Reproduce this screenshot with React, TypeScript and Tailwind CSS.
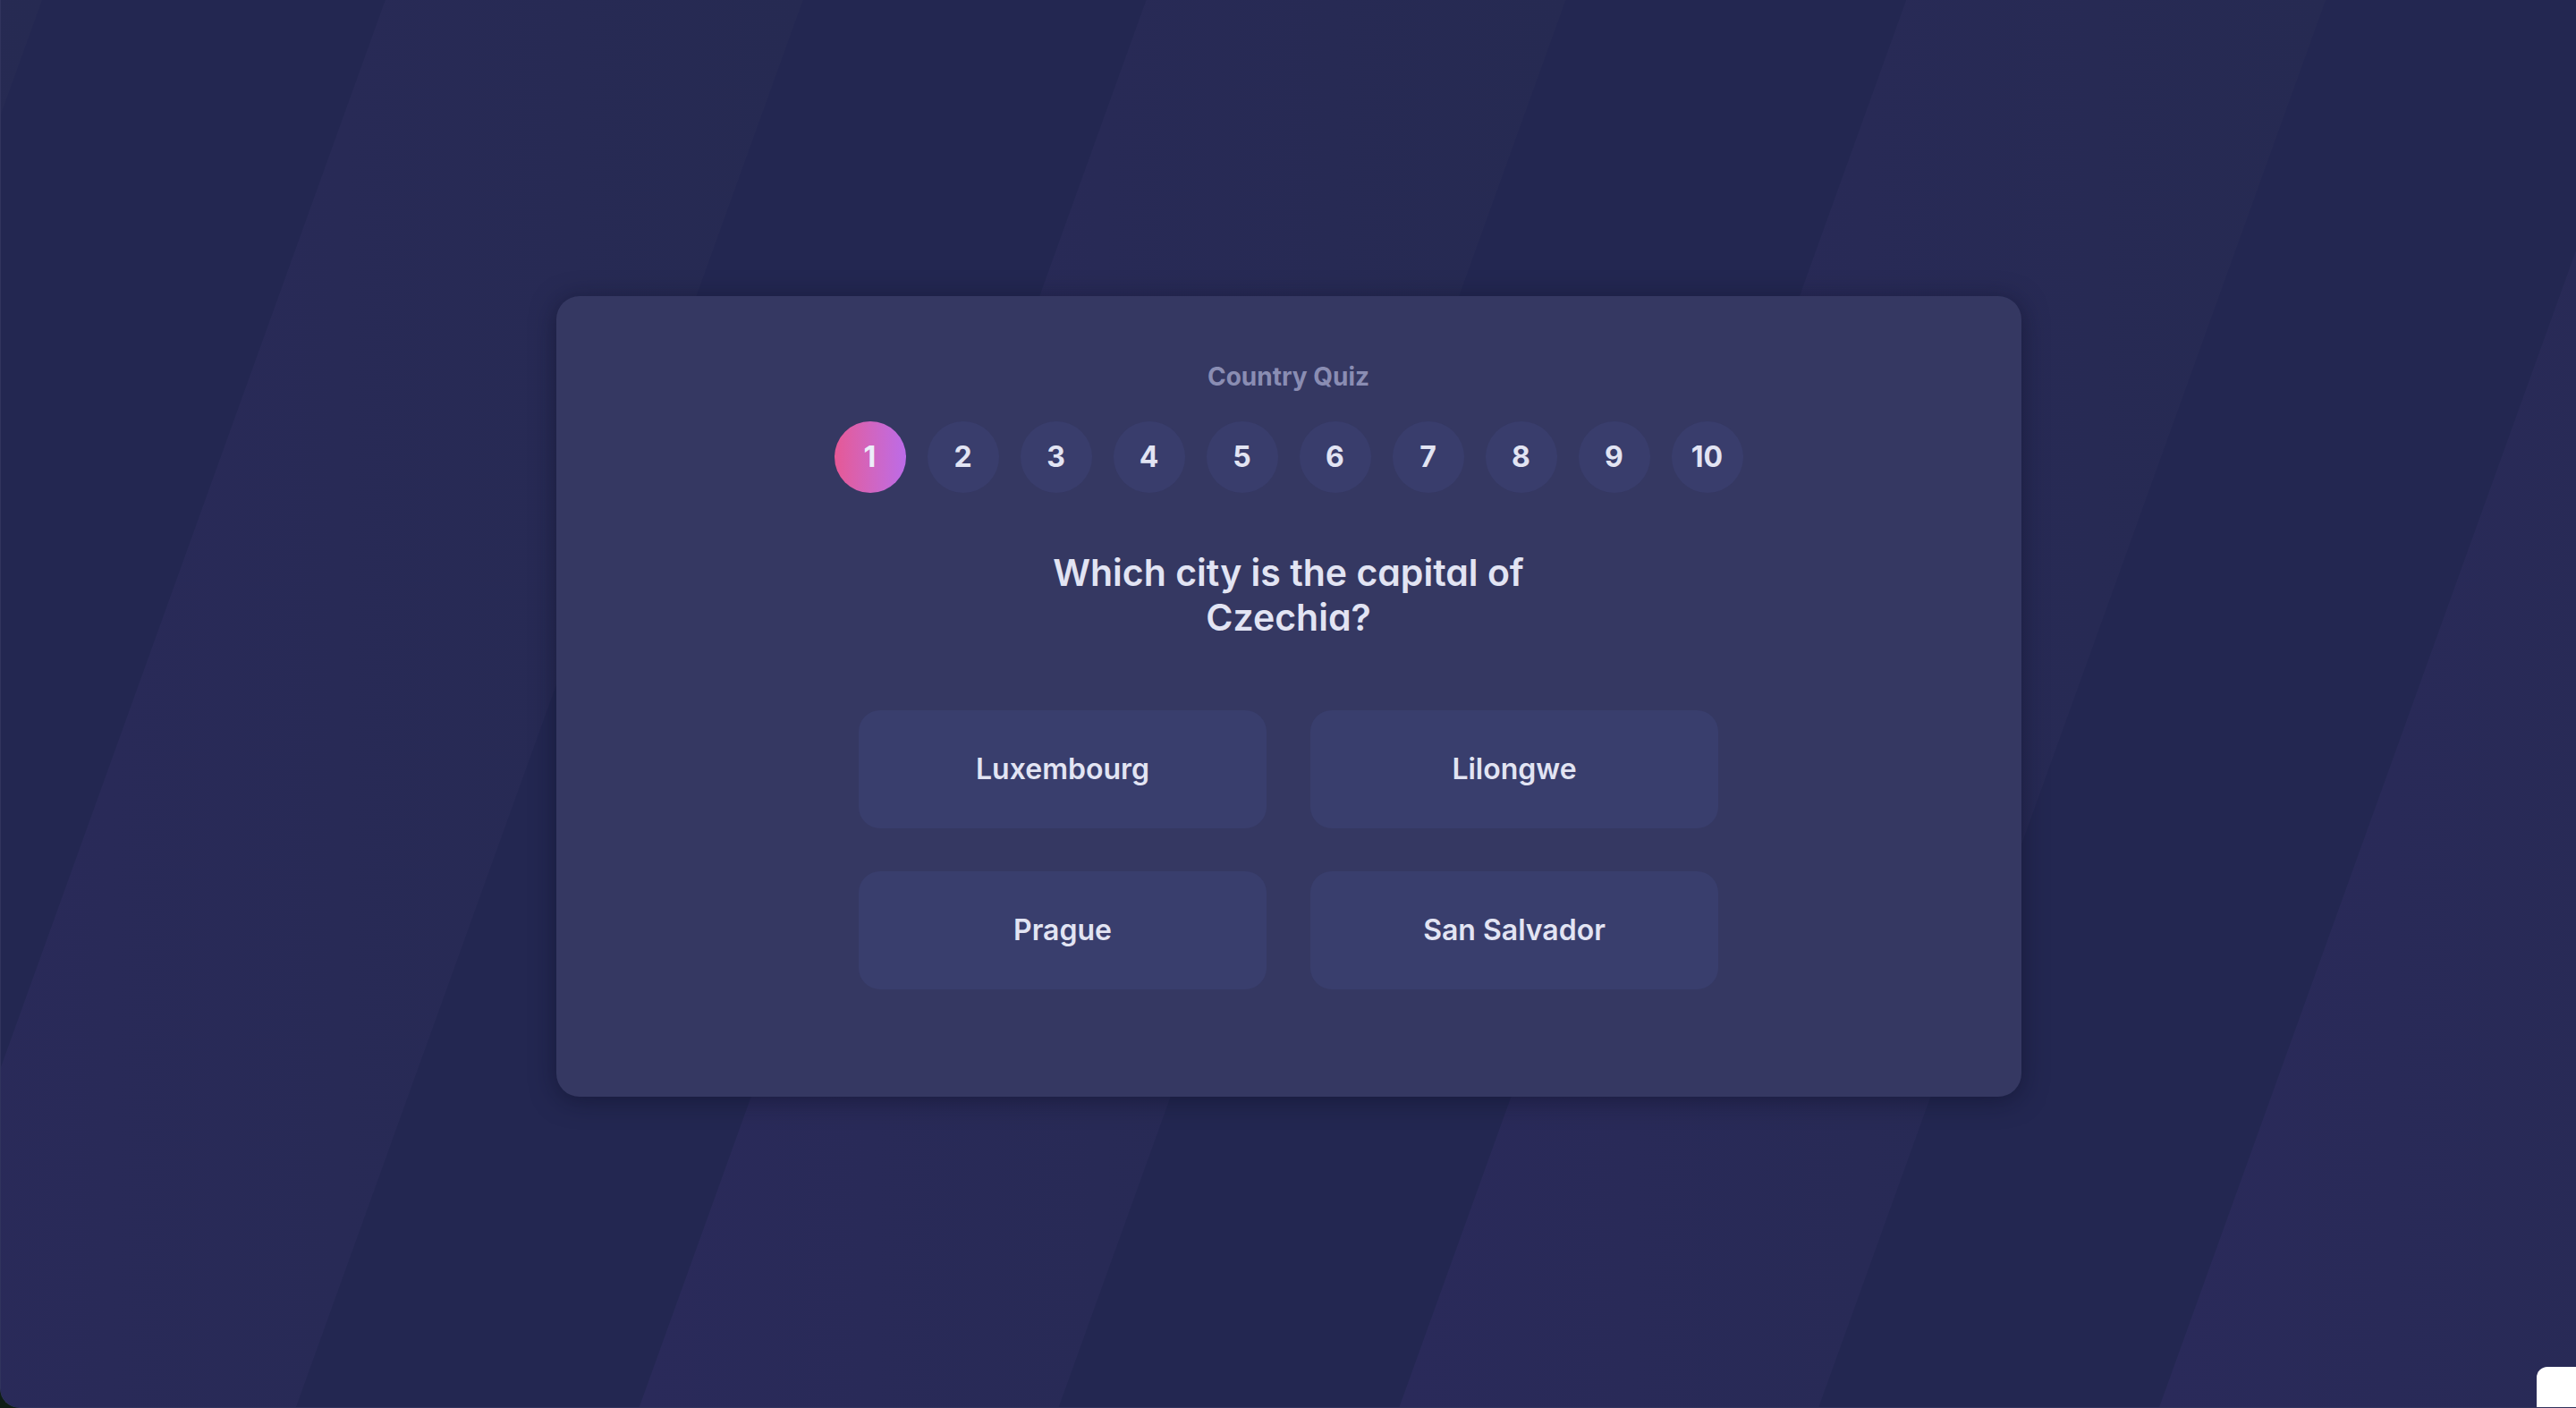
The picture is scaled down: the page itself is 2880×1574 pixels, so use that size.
import React from "react";

const answers = ["Luxembourg", "Lilongwe", "Prague", "San Salvador"];
const steps = [1, 2, 3, 4, 5, 6, 7, 8, 9, 10];

function Background() {
  const shift = 567;
  const H = 1574;
  const light: [number, number][] = [
    [-420, 46],
    [430, 897],
    [1281, 1750],
    [2131, 2600],
    [2981, 3450],
  ];
  return (
    <svg
      className="absolute inset-0 h-full w-full"
      viewBox="0 0 2880 1574"
      preserveAspectRatio="none"
    >
      <defs>
        <linearGradient id="stripe" x1="0" y1="0" x2="1" y2="0" gradientUnits="objectBoundingBox">
          <stop offset="0" stopColor="#2a2a5a" />
          <stop offset="1" stopColor="#262a52" />
        </linearGradient>
      </defs>
      <rect x="0" y="0" width="2880" height="1574" fill="#232751" />
      {light.map(([a, b], i) => (
        <polygon
          key={i}
          points={`${a},0 ${b},0 ${b - shift},${H} ${a - shift},${H}`}
          fill="url(#stripe)"
        />
      ))}
    </svg>
  );
}

export default function App() {
  return (
    <div className="h-[1574px] w-[2880px] overflow-hidden bg-[#0f1e16]">
      <div
        className="relative h-full w-full overflow-hidden rounded-bl-[22px] border-b border-l border-[#31345d] bg-[#232751]"
        style={{ fontFamily: "Inter, 'Noto Sans', sans-serif" }}
      >
        <Background />
        <div className="relative flex justify-center pt-[331px]">
          <div className="flex w-[1638px] flex-col items-center rounded-[26px] bg-[#353862] pb-[120px] pt-[76px] shadow-[0_4px_28px_rgba(12,14,38,0.5)]">
            <h1 className="text-[28px] font-bold leading-none text-[#8a8db3]">
              Country Quiz
            </h1>
            <div className="mt-[36px] flex gap-[24px]">
              {steps.map((n) => (
                <div
                  key={n}
                  className={
                    n === 1
                      ? "flex h-[80px] w-[80px] items-center justify-center rounded-full bg-gradient-to-r from-[#e65895] to-[#bc6be8] text-[32px] font-bold text-[#eceef9]"
                      : "flex h-[80px] w-[80px] items-center justify-center rounded-full bg-[#393d6c] text-[32px] font-bold text-[#e2e4f3]"
                  }
                >
                  {n}
                </div>
              ))}
            </div>
            <h2 className="mt-[64px] max-w-[600px] text-center text-[41px] font-semibold leading-[50px] text-[#e2e4f3] [font-feature-settings:'cv11']">
              Which city is the capital of Czechia?
            </h2>
            <div className="mt-[79px] grid grid-cols-[456px_456px] gap-x-[49px] gap-y-[48px]">
              {answers.map((a) => (
                <button
                  key={a}
                  className="flex h-[132px] items-center justify-center rounded-[24px] bg-[#393e6d] text-[32px] font-semibold text-[#e2e4f3]"
                >
                  {a}
                </button>
              ))}
            </div>
          </div>
        </div>
        <div className="absolute bottom-0 right-0 h-[45px] w-[44px] rounded-tl-[12px] bg-white" />
      </div>
    </div>
  );
}
